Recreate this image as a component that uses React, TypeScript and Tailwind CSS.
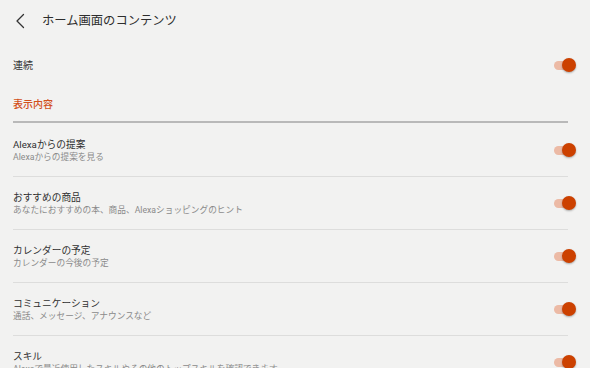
import React from "react";

const font = { fontFamily: '"Roboto", "Noto Sans CJK JP", sans-serif' };

function Toggle() {
  return (
    <div className="relative w-[22px] h-[14px] -mr-[8px] shrink-0">
      <div className="absolute left-0 top-[2.5px] w-[17px] h-[9px] rounded-full bg-[#ecbaa5]" />
      <div className="absolute right-0 top-0 w-[14px] h-[14px] rounded-full bg-[#cc4100] shadow-[0_1px_2px_rgba(0,0,0,0.3)]" />
    </div>
  );
}

const rows = [
  { t: "Alexaからの提案", s: "Alexaからの提案を見る" },
  { t: "おすすめの商品", s: "あなたにおすすめの本、商品、Alexaショッピングのヒント" },
  { t: "カレンダーの予定", s: "カレンダーの今後の予定" },
  { t: "コミュニケーション", s: "通話、メッセージ、アナウンスなど" },
  { t: "スキル", s: "Alexaで最近使用したスキルやその他のトップスキルを確認できます" },
];

export default function App() {
  return (
    <div
      className="w-[590px] h-[368px] overflow-hidden bg-[#f2f2f1] text-[#333333]"
      style={font}
    >
      <div className="h-[42px] flex items-center">
        <svg className="ml-[15px] w-[10px] h-[16px]" viewBox="0 0 10 16" fill="none">
          <path d="M8.5 1.5 L2 8 L8.5 14.5" stroke="#333" strokeWidth="1.3" strokeLinecap="round" strokeLinejoin="round" />
        </svg>
        <div className="ml-[17px] text-[12.3px] leading-none text-[#2d2d2d]">ホーム画面のコンテンツ</div>
      </div>
      <div className="pl-[13px] pr-[22px]">
        <div className="h-[46px] flex items-center justify-between">
          <div className="text-[10px] text-[#333]">連続</div>
          <Toggle />
        </div>
        <div className="h-[32px] flex items-center">
          <div className="text-[10px] text-[#d2501a] font-medium">表示内容</div>
        </div>
        <div className="mt-[1px] mb-[1px] h-[2px] bg-[#b9b9b9]" />
        {rows.map((r) => (
          <div
            key={r.t}
            className="h-[53px] flex items-center justify-between border-b border-[#dddddc]"
          >
            <div className="flex flex-col pt-[1px]">
              <div className="text-[9.7px] leading-[13px] text-[#303030]">{r.t}</div>
              <div className="text-[8.7px] leading-[13px] text-[#8a8a8a]">{r.s}</div>
            </div>
            <Toggle />
          </div>
        ))}
      </div>
    </div>
  );
}
